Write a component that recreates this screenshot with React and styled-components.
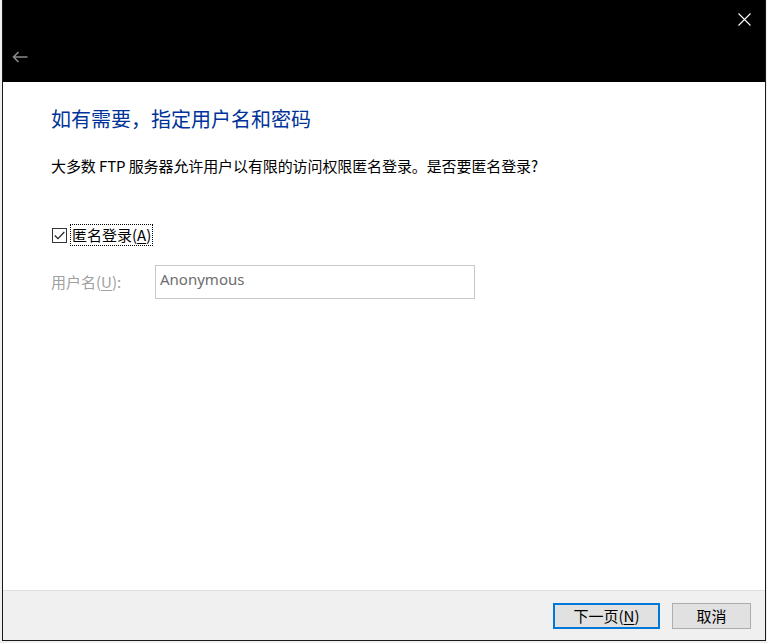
import React from "react";
import styled, { createGlobalStyle } from "styled-components";

const Global = createGlobalStyle`
  html, body { margin: 0; padding: 0; background: #f0f0f0; }
  body { font-family: "Noto Sans", "Noto Sans CJK SC", sans-serif; }
  * { box-sizing: border-box; }
`;

const Window = styled.div`
  margin-left: 2px;
  width: 764px;
  height: 641px;
  display: flex;
  flex-direction: column;
  border: 1px solid #1a1a1a;
  border-top: none;
  background: #fff;
`;

const Header = styled.div`
  height: 82px;
  background: #000;
  display: flex;
  flex-direction: column;
`;

const TitleRow = styled.div`
  height: 38px;
  display: flex;
  justify-content: flex-end;
`;

const NavRow = styled.div`
  height: 38px;
  display: flex;
  align-items: center;
`;

const IconButton = styled.div`
  width: ${(p) => p.$w}px;
  height: 38px;
  display: flex;
  align-items: center;
  justify-content: center;
`;

const Content = styled.div`
  flex: 1;
  padding: 23px 48px 0 48px;
  display: flex;
  flex-direction: column;
`;

const Heading = styled.h1`
  margin: 0;
  font-family: "Noto Sans CJK SC", sans-serif;
  font-weight: 400;
  font-size: 20px;
  line-height: 28px;
  color: #003399;
`;

const Description = styled.p`
  margin: 23px 0 0 0;
  font-family: "Noto Sans CJK SC", sans-serif;
  font-size: 15px;
  line-height: 20px;
  color: #000;
  letter-spacing: -0.1px;
`;

const CheckRow = styled.label`
  margin-top: 48px;
  height: 22px;
  display: flex;
  align-items: center;
  gap: 3px;
`;

const Box = styled.span`
  width: 15px;
  height: 15px;
  margin-left: 1px;
  border: 1px solid #333;
  background: #fff;
  display: flex;
  align-items: center;
  justify-content: center;
`;

const FocusLabel = styled.span`
  border: 1px dotted #000;
  padding: 0 1px;
  font-family: "Noto Sans CJK SC", sans-serif;
  font-size: 15px;
  line-height: 20px;
  color: #000;
`;

const Key = styled.span`
  text-decoration: underline;
  text-underline-offset: 2px;
`;

const FieldRow = styled.div`
  margin-top: 19px;
  display: flex;
  align-items: center;
`;

const FieldLabel = styled.span`
  width: 104px;
  font-family: "Noto Sans CJK SC", sans-serif;
  font-size: 15px;
  line-height: 20px;
  color: #a0a0a0;
`;

const TextBox = styled.div`
  width: 320px;
  height: 34px;
  border: 1px solid #c8c8c8;
  background: #fff;
  padding: 2px 4px 0 4px;
  font-family: "Noto Sans", sans-serif;
  font-size: 15px;
  line-height: 22px;
  color: #6d6d6d;
`;

const Footer = styled.div`
  height: 50px;
  border-top: 1px solid #dfdfdf;
  background: #f0f0f0;
  display: flex;
  justify-content: flex-end;
  align-items: flex-start;
  padding: 12px 14px 0 0;
  gap: 12px;
`;

const Button = styled.div`
  width: ${(p) => p.$w}px;
  height: 26px;
  background: #e1e1e1;
  border: ${(p) => (p.$primary ? "2px solid #0078d7" : "1px solid #adadad")};
  display: flex;
  align-items: center;
  justify-content: center;
  font-family: "Noto Sans CJK SC", sans-serif;
  font-size: 15px;
  line-height: 20px;
  color: #000;
`;

export default function App() {
  return (
    <>
      <Global />
      <Window>
        <Header>
          <TitleRow>
            <IconButton $w={42}>
              <svg width="13" height="13" viewBox="0 0 13 13">
                <path d="M0.5 0.5 L12.5 12.5 M12.5 0.5 L0.5 12.5" stroke="#fff" strokeWidth="1.1" />
              </svg>
            </IconButton>
          </TitleRow>
          <NavRow>
            <IconButton $w={34}>
              <svg width="16" height="12" viewBox="0 0 16 12">
                <path d="M15.5 6 H1.5 M6.5 1 L1.5 6 L6.5 11" stroke="#8a8a8a" strokeWidth="1.6" fill="none" />
              </svg>
            </IconButton>
          </NavRow>
        </Header>
        <Content>
          <Heading>如有需要，指定用户名和密码</Heading>
          <Description>大多数 FTP 服务器允许用户以有限的访问权限匿名登录。是否要匿名登录?</Description>
          <CheckRow>
            <Box>
              <svg width="11" height="9" viewBox="0 0 11 9">
                <path d="M0.8 4.5 L4 7.7 L10.3 1" stroke="#222" strokeWidth="1.2" fill="none" />
              </svg>
            </Box>
            <FocusLabel>
              匿名登录(<Key>A</Key>)
            </FocusLabel>
          </CheckRow>
          <FieldRow>
            <FieldLabel>
              用户名(<Key>U</Key>):
            </FieldLabel>
            <TextBox>Anonymous</TextBox>
          </FieldRow>
        </Content>
        <Footer>
          <Button $w={107} $primary>
            下一页(<Key>N</Key>)
          </Button>
          <Button $w={79}>取消</Button>
        </Footer>
      </Window>
    </>
  );
}
